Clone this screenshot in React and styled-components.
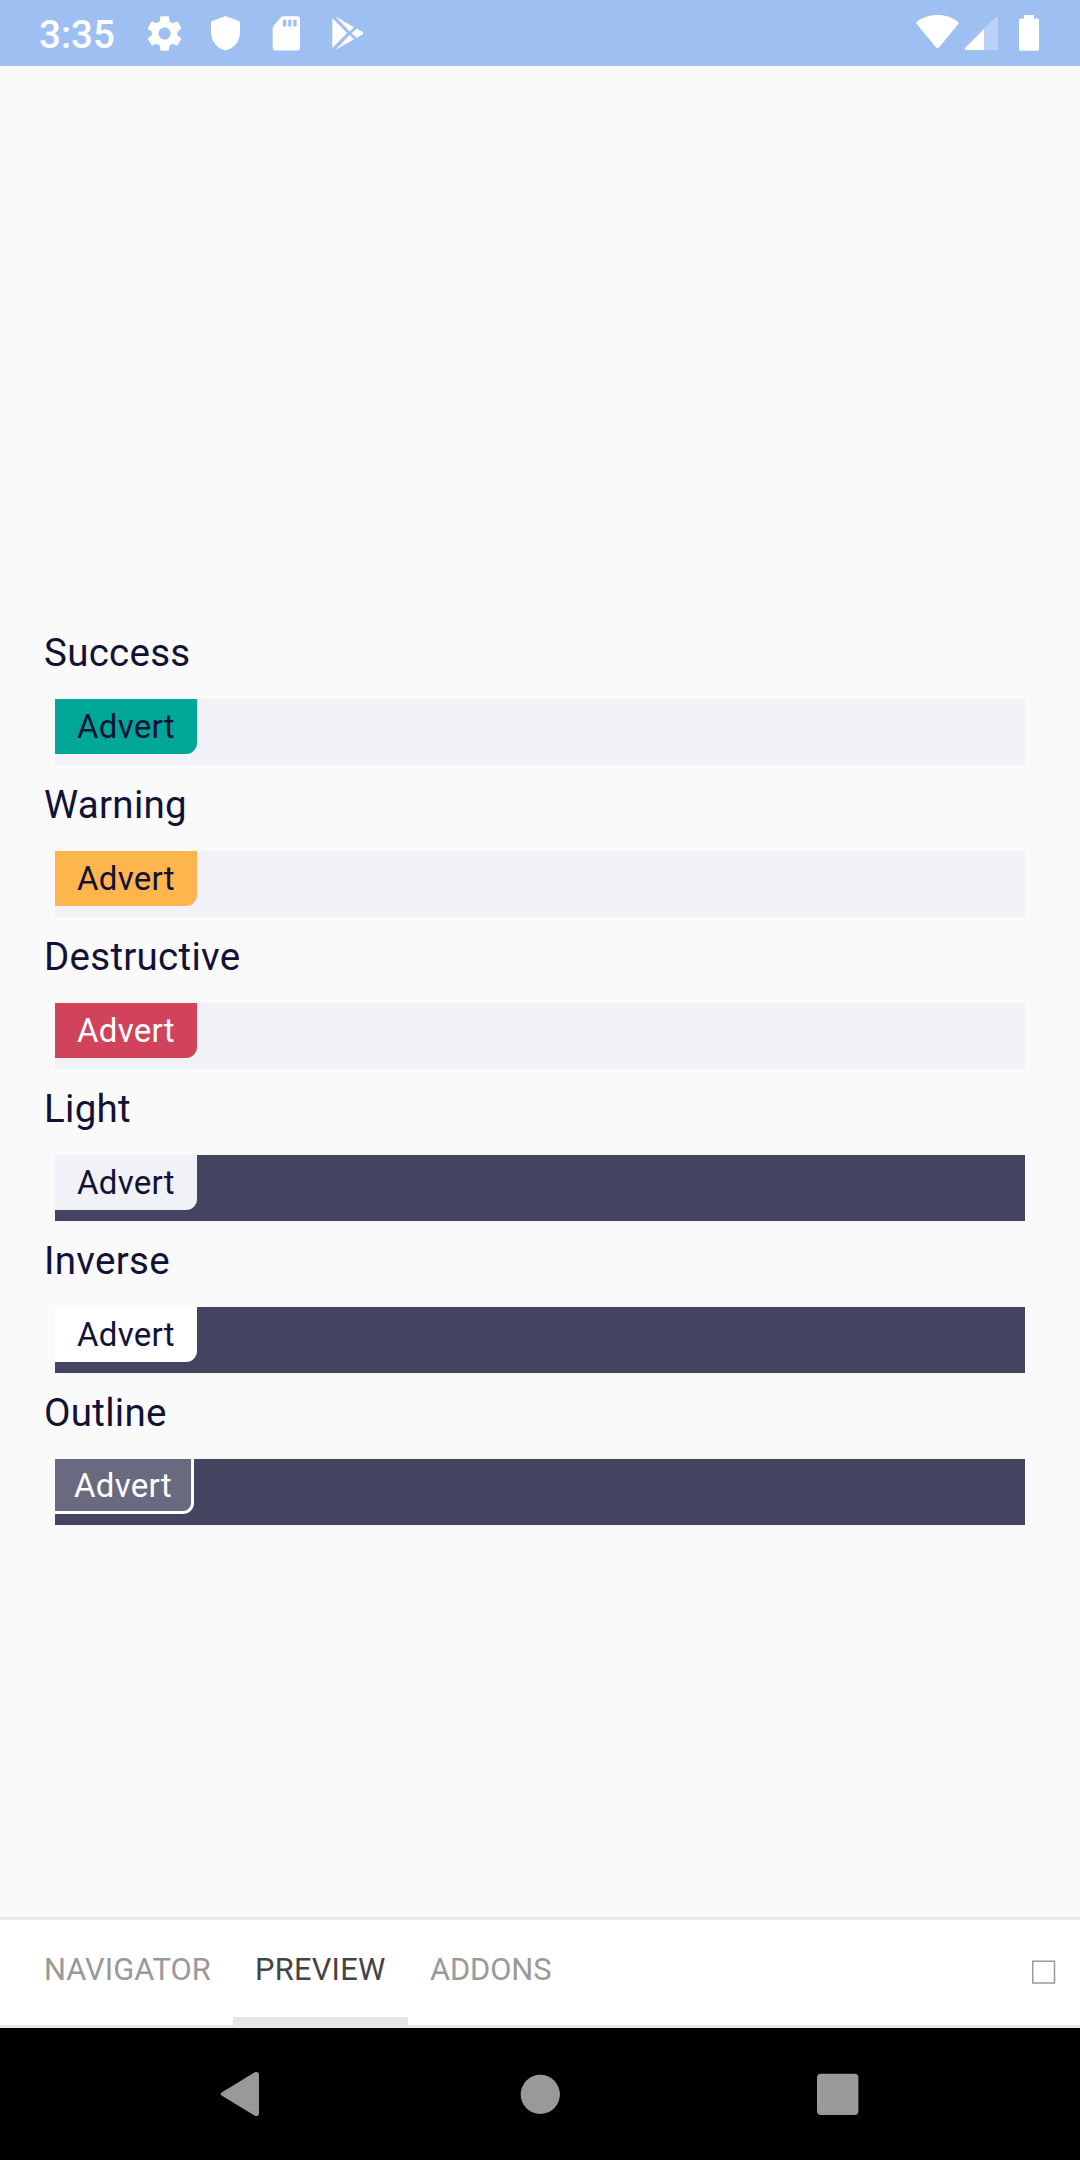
import React from "react";
import styled, { createGlobalStyle } from "styled-components";

const GlobalStyle = createGlobalStyle`
  * { box-sizing: border-box; }
  body { margin: 0; background: #fafafa; }
`;

const Screen = styled.div`
  width: 1080px;
  height: 2160px;
  display: flex;
  flex-direction: column;
  overflow: hidden;
  background: #fafafa;
  font-family: Roboto, "Noto Sans", sans-serif;
`;

const StatusBar = styled.header`
  height: 66px;
  flex: none;
  display: flex;
  justify-content: space-between;
  padding: 0 40px 0 39px;
  background: #9dbff2;
  color: #fff;
`;

const StatusGroup = styled.div`
  display: flex;
  align-items: flex-start;
`;

const Clock = styled.span`
  width: 108px;
  padding-top: 2px;
  font-size: 38.5px;
  font-weight: 500;
  line-height: 66px;
`;

const StatusIcon = styled.svg`
  display: block;
  flex: none;
  width: ${(p) => p.$w}px;
  height: 66px;
  margin-right: ${(p) => p.$gap || 0}px;
  fill: #fff;
`;

const Stories = styled.main`
  flex: 1;
  padding: 561px 44px 0;
`;

const Story = styled.section`
  height: 152px;
`;

const StoryTitle = styled.h2`
  margin: 0;
  height: 77px;
  padding-top: 3px;
  font-size: 38.5px;
  font-weight: 400;
  line-height: 46px;
  letter-spacing: 0.28px;
  color: #111236;
`;

const Strip = styled.div`
  display: flex;
  align-items: flex-start;
  height: 66px;
  margin: -5px 11px 0;
  background: ${(p) => (p.$dark ? "#444560" : "#f1f2f8")};
`;

const Badge = styled.span`
  height: 55px;
  width: ${(p) => (p.$outlined ? 139 : 142)}px;
  padding-left: ${(p) => (p.$outlined ? 19 : 22)}px;
  font-size: 33px;
  line-height: ${(p) => (p.$outlined ? 54 : 56)}px;
  letter-spacing: 0.25px;
  white-space: nowrap;
  color: ${(p) => p.$color};
  background: ${(p) => p.$bg};
  border: 0 solid #fff;
  border-width: ${(p) => (p.$outlined ? "0 3px 3px 0" : "0")};
  border-bottom-right-radius: 11px;
  background-clip: padding-box;
`;

const TabBar = styled.nav`
  height: 111px;
  flex: none;
  display: flex;
  padding: 0 22px;
  background: #fff;
  border-top: 3px solid #e6e6e6;
  box-shadow: inset 0 -3px #e6e6e6;
`;

const Tab = styled.div`
  width: ${(p) => p.$w}px;
  padding: 0 22px;
  border-bottom: 11px solid ${(p) => (p.$active ? "#e6e6e6" : "transparent")};
  color: ${(p) => (p.$active ? "#444" : "#999")};
  font-size: 30.8px;
  line-height: 100px;
  letter-spacing: ${(p) => p.$tracking || 0}px;
  white-space: nowrap;
`;

const ToggleIcon = styled.svg`
  display: block;
  width: 24px;
  height: 24px;
  margin: 40px 2px 0 auto;
`;

const SystemNav = styled.footer`
  height: 132px;
  flex: none;
  display: flex;
  align-items: center;
  justify-content: space-between;
  padding: 0 221px 0 220px;
  background: #000;
`;

const NavIcon = styled.svg`
  display: block;
  width: ${(p) => p.$w}px;
  height: 46px;
  fill: #999;
`;

const stories = [
  { title: "Success", bg: "#00a698", color: "#111236" },
  { title: "Warning", bg: "#ffb54d", color: "#111236" },
  { title: "Destructive", bg: "#d1435b", color: "#fff" },
  { title: "Light", bg: "#f1f2f8", color: "#111236", dark: true },
  { title: "Inverse", bg: "#fff", color: "#111236", dark: true },
  { title: "Outline", bg: "rgba(255,255,255,0.2)", color: "#fff", dark: true, outlined: true },
];

export default function App() {
  return (
    <Screen>
      <GlobalStyle />
      <StatusBar>
        <StatusGroup>
          <Clock>3:35</Clock>
          <StatusIcon $w={35} $gap={28} viewBox="0 0 35 66">
            <g transform="translate(-3 12.8) scale(1.72)">
              <path d="M19.43 12.98c.04-.32.07-.64.07-.98s-.03-.66-.07-.98l2.11-1.65c.19-.15.24-.42.12-.64l-2-3.46c-.12-.22-.39-.3-.61-.22l-2.49 1c-.52-.4-1.08-.73-1.69-.98l-.38-2.65C14.46 2.18 14.25 2 14 2h-4c-.25 0-.46.18-.49.42l-.38 2.65c-.61.25-1.17.59-1.69.98l-2.49-1c-.23-.09-.49 0-.61.22l-2 3.46c-.13.22-.07.49.12.64l2.11 1.65c-.04.32-.07.65-.07.98s.03.66.07.98l-2.11 1.65c-.19.15-.24.42-.12.64l2 3.46c.12.22.39.3.61.22l2.49-1c.52.4 1.08.73 1.69.98l.38 2.65c.03.24.24.42.49.42h4c.25 0 .46-.18.49-.42l.38-2.65c.61-.25 1.17-.59 1.69-.98l2.49 1c.23.09.49 0 .61-.22l2-3.46c.12-.22.07-.49-.12-.64l-2.11-1.65zM12 15.5c-1.93 0-3.5-1.57-3.5-3.5s1.57-3.5 3.5-3.5 3.5 1.57 3.5 3.5-1.57 3.5-3.5 3.5z" />
            </g>
          </StatusIcon>
          <StatusIcon $w={31} $gap={31} viewBox="0 0 31 66">
            <path d="M15.4 16 28.7 21Q30 21.6 30 23V32C30 42 23.5 48.4 15.4 50.6 7.5 48.4 1 42 1 32V23Q1 21.6 2.3 21Z" />
          </StatusIcon>
          <StatusIcon $w={28} $gap={32} viewBox="0 0 28 66">
            <path fillRule="evenodd" d="M11 16.2H25Q28 16.2 28 19.2V47.4Q28 50.4 25 50.4H3.6Q.7 50.4.7 47.4V28Q.7 26.6 1.7 25.5L9 17.2Q9.9 16.2 11 16.2ZM11 19.8V26.6H14.3V19.8ZM16.2 19.8V26.6H19.5V19.8ZM21.3 19.8V26.6H24.6V19.8Z" />
          </StatusIcon>
          <StatusIcon $w={32} viewBox="0 0 32 66">
            <path d="M.3 18.3 15.2 33.1.3 48.1ZM3.4 16.5 22.1 27.2 17.6 31.4ZM25 28.4 30.6 32Q31.8 33.2 30.6 34.3L25 38.1 19.5 33.2ZM17.6 35 22.1 39.3 3.4 50.1Z" />
          </StatusIcon>
        </StatusGroup>
        <StatusGroup>
          <StatusIcon $w={43} $gap={5} viewBox="0 0 43 66">
            <path d="M21.5 15C29.8 15 36.6 17.6 41.7 21.4Q43.4 22.7 42.1 24.3L22.9 47.5Q21.5 49 20.1 47.5L.9 24.3Q-.4 22.7 1.3 21.4C6.4 17.6 13.2 15 21.5 15Z" />
          </StatusIcon>
          <StatusIcon $w={34} $gap={20} viewBox="0 0 34 66">
            <path opacity=".3" d="M20 29 31.2 17.4Q34 15.5 34 18.4V48.5Q34 50 32.5 50H20Z" />
            <path d="M20 29V50H2Q0 49.8 1 48Z" />
          </StatusIcon>
          <StatusIcon $w={22} viewBox="0 0 22 66">
            <path d="M6 15H16V18.5H19.3Q21 18.5 21 20.2V49.2Q21 50.8 19.3 50.8H2.7Q1 50.8 1 49.2V20.2Q1 18.5 2.7 18.5H6Z" />
          </StatusIcon>
        </StatusGroup>
      </StatusBar>

      <Stories>
        {stories.map((s) => (
          <Story key={s.title}>
            <StoryTitle>{s.title}</StoryTitle>
            <Strip $dark={s.dark}>
              <Badge $bg={s.bg} $color={s.color} $outlined={s.outlined}>Advert</Badge>
            </Strip>
          </Story>
        ))}
      </Stories>

      <TabBar>
        <Tab $w={211} $tracking={0.05}>NAVIGATOR</Tab>
        <Tab $w={175} $tracking={0.25} $active>PREVIEW</Tab>
        <Tab $w={166} $tracking={-0.1}>ADDONS</Tab>
        <ToggleIcon viewBox="0 0 24 24">
          <path d="M.7 1.3H22.5V23H.7Z" fill="none" stroke="#999" strokeWidth="1.5" />
        </ToggleIcon>
      </TabBar>

      <SystemNav>
        <NavIcon $w={40} viewBox="0 0 40 46">
          <path d="M2 21.2 34.8 1.3Q39 .2 39 4V42Q39 45.8 34.8 44.7L2 24.8Q-.8 23 2 21.2Z" />
        </NavIcon>
        <NavIcon $w={43} viewBox="0 0 43 46">
          <circle cx="23.3" cy="23.4" r="19.6" />
        </NavIcon>
        <NavIcon $w={42} viewBox="0 0 42 46">
          <rect x="0" y="2.8" width="41.4" height="41.2" rx="4" />
        </NavIcon>
      </SystemNav>
    </Screen>
  );
}
